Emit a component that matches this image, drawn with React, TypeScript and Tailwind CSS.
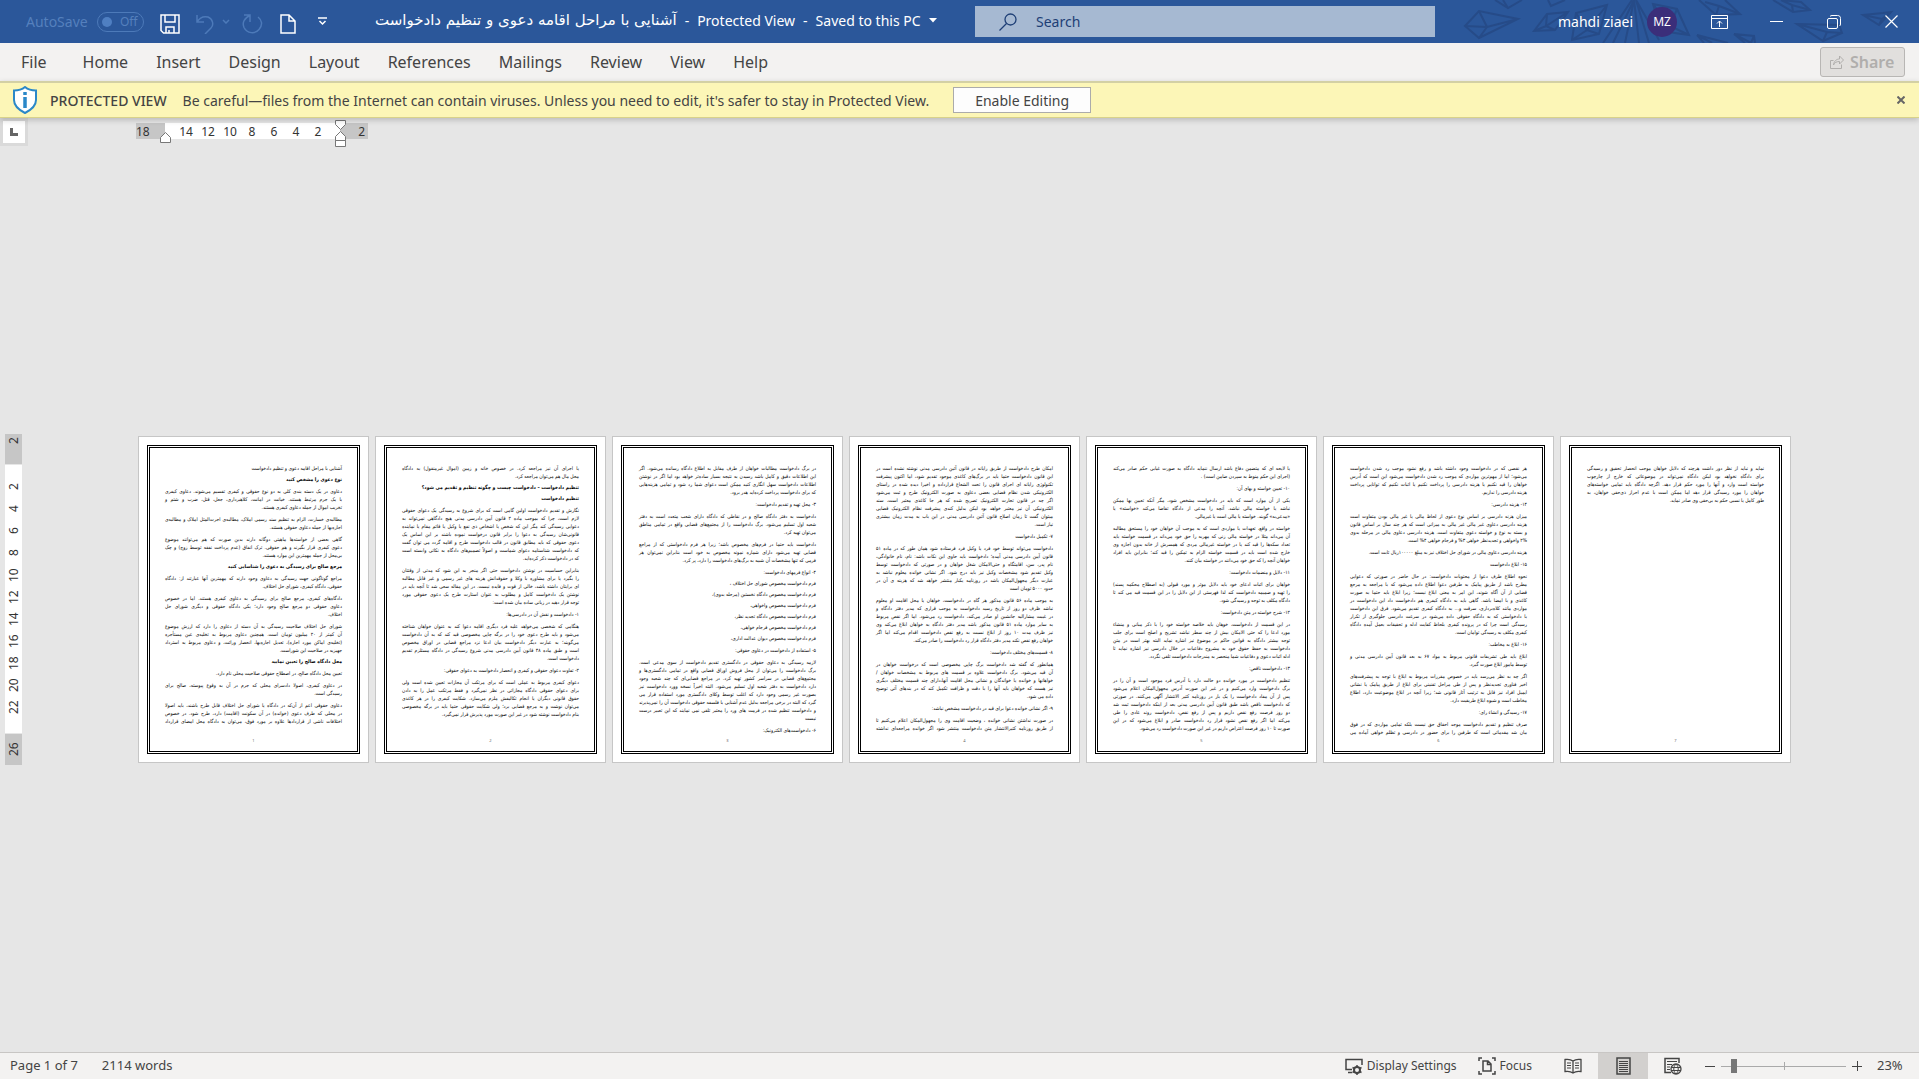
import type { ReactNode } from "react";
import clsx from "clsx";

type Block = { kind?: "heading" | "item"; lines: string[] };

const TABS = ["Home", "Insert", "Design", "Layout", "References", "Mailings", "Review", "View", "Help"];

// a trailing space marks a last line that runs on to the next page
const PAGES: Block[][] = [
  [
    { lines: ["آشنایی با مراحل اقامه دعوی و تنظیم دادخواست"] },
    { kind: "heading", lines: ["نوع دعوی را مشخص کنید"] },
    {
      lines: [
        "دعاوی در یک دسته بندی کلی به دو نوع حقوقی و کیفری تقسیم می‌شوند. دعاوی کیفری",
        "با یک جرم مرتبط هستند. خیانت در امانت، کلاهبرداری، جعل، قتل، ضرب و شتم و",
        "تخریب اموال از جمله دعاوی کیفری هستند.",
      ],
    },
    {
      lines: [
        "مطالبه‌ی خسارت، الزام به تنظیم سند رسمی املاک، مطالبه‌ی اجرت‌المثل املاک و مطالبه‌ی",
        "اجاره‌بها از جمله دعاوی حقوقی هستند.",
      ],
    },
    {
      lines: [
        "گاهی بعضی از خواسته‌ها ماهیتی دوگانه دارند بدین صورت که هم می‌توانند موضوع",
        "دعوی کیفری قرار بگیرند و هم حقوقی. ترک انفاق (عدم پرداخت نفقه توسط زوج) و چک",
        "بی‌محل از جمله مهمترین این موارد هستند.",
      ],
    },
    { kind: "heading", lines: ["مرجع صالح برای رسیدگی به دعوی را شناسایی کنید"] },
    {
      lines: [
        "مراجع گوناگونی جهت رسیدگی به دعاوی وجود دارند که مهمترین آنها عبارتند از: دادگاه",
        "حقوقی، دادگاه کیفری، شورای حل اختلاف.",
      ],
    },
    {
      lines: [
        "دادگاه‌های کیفری، مرجع صالح برای رسیدگی به دعاوی کیفری هستند. اما در خصوص",
        "دعاوی حقوقی دو مرجع صالح وجود دارد؛ یکی دادگاه حقوقی و دیگری شورای حل",
        "اختلاف.",
      ],
    },
    {
      lines: [
        "شورای حل اختلاف صلاحیت رسیدگی به آن دسته از دعاوی را دارد که ارزش موضوع",
        "آن کمتر از ۲۰ میلیون تومان است. همچنین دعاوی مربوط به تخلیه‌ی عین مستأجره",
        "(تخلیه‌ی اماکن مورد اجاره)، تعدیل اجاره‌بها، انحصار وراثت، و دعاوی مربوط به استرداد",
        "جهیزیه در صلاحیت این شوراست.",
      ],
    },
    { kind: "heading", lines: ["محل دادگاه صالح را تعیین نمایید"] },
    { lines: ["تعیین محل دادگاه صالح، در اصطلاح حقوقی صلاحیت محلی نام دارد."] },
    {
      lines: [
        "در دعاوی کیفری، اصولا دادسرای محلی که جرم در آن به وقوع پیوسته، صالح برای",
        "رسیدگی است.",
      ],
    },
    {
      lines: [
        "دعاوی حقوقی اعم از آن‌که در دادگاه یا شورای حل اختلاف قابل طرح باشند، باید اصولا",
        "در محلی که طرف دعوی (خوانده) در آن سکونت (اقامت) دارد، طرح شود. در خصوص",
        "اختلافات ناشی از قراردادها علاوه بر مورد فوق، می‌توان به دادگاه محل امضای قرارداد ",
      ],
    },
  ],
  [
    {
      lines: [
        "یا اجرای آن نیز مراجعه کرد. در خصوص خانه و زمین (اموال غیرمنقول) به دادگاه",
        "محل مال هم می‌توان مراجعه کرد.",
      ],
    },
    { kind: "heading", lines: ["تنظیم دادخواست – دادخواست چیست و چگونه تنظیم و تقدیم می شود؟"] },
    { kind: "heading", lines: ["تنظیم دادخواست"] },
    {
      lines: [
        "نگارش و تقدیم دادخواست اولین گامی است که برای شروع به رسیدگی یک دعوای حقوقی",
        "لازم است، چرا که بموجب ماده ۲ قانون آیین دادرسی مدنی هیچ دادگاهی نمی‌تواند به",
        "دعوایی رسیدگی کند مگر این که شخص یا اشخاص ذی نفع یا وکیل یا قائم مقام یا نماینده",
        "قانونی‌شان رسیدگی به دعوا را برابر قانون درخواست نموده باشند بر این اساس یک",
        "دعوی حقوقی که باید مطابق قانون در قالب دادخواست طرح و اقامه گردد می توان گفت",
        "که دادخواست شناسنامه دعوای شماست و اصولاً تصمیم‌های دادگاه به نکاتی وابسته است",
        "که در دادخواست ذکر کرده‌اید.",
      ],
    },
    {
      lines: [
        "بنابراین حساسیت در نوشتن دادخواست حتی اگر منجر به این شود که مدتی از وقتتان",
        "را بگیرد یا برای مشاوره با وکلا و حقوقدانش هزینه های غیر رسمی و غیر قابل مطالبه",
        "ای برایتان داشته باشد، خالی از قوت و فایده نیست. در این مقاله سعی شد تا آنچه باید در",
        "نوشتن یک دادخواست کامل و مطلوب به عنوان استارت طرح یک دعوی حقوقی مورد",
        "توجه قرار دهید در زبانی ساده بیان شده است:",
      ],
    },
    { lines: ["۱- دادخواست و نقش آن در دادرسی‌ها:"] },
    {
      lines: [
        "هنگامی که شخصی می‌خواهد علیه فرد دیگری اقامه دعوا کند به عنوان خواهان شناخته",
        "می‌شود و باید طرح دعوی خود را در برگه چاپی مخصوصی قید کند که به آن دادخواست",
        "می‌گویند؛ به عبارت دیگر دادخواست بیان ادعا نزد مراجع قضایی در اوراق مخصوص",
        "است و طبق ماده ۴۸ قانون آیین دادرسی مدنی شروع رسیدگی در دادگاه مستلزم تقدیم",
        "دادخواست است.",
      ],
    },
    { lines: ["۲- تفاوت دعوای حقوقی و کیفری و انحصار دادخواست به دعوای حقوقی:"] },
    {
      lines: [
        "دعوای کیفری مربوط به عملی است که برای مرتکب آن مجازات تعیین شده است ولی",
        "برای دعوای حقوقی دادگاه مجازاتی در نظر نمی‌گیرد و فقط مرتکب عمل را به دادن",
        "حقوق قانونی دیگران یا انجام تکالیفش ملزم می‌سازد. شکایت کیفری را در هر کاغذی",
        "می‌توان نوشت و به مرجع قضایی برد؛ ولی شکایت حقوقی حتما باید در برگه مخصوصی",
        "بنام دادخواست نوشته شود در غیر این صورت مورد پذیرش قرار نمی‌گیرد.",
      ],
    },
  ],
  [
    {
      lines: [
        "در برگ دادخواست مطالبات خواهان از طرف مقابل به اطلاع دادگاه رسانده می‌شود. اگر",
        "این اطلاعات دقیق و کامل باشد رسیدن به نتیجه بسیار ساده‌تر خواهد بود اما اگر در نوشتن",
        "اطلاعات دادخواست سهل انگاری کنید ممکن است دعوای شما رد شود و تمامی هزینه‌هایی",
        "که برای دادخواست پرداخت کرده‌اید هدر برود.",
      ],
    },
    { lines: ["۳- محل تهیه و تقدیم دادخواست:"] },
    {
      lines: [
        "دادخواست به دفتر دادگاه صالح و در نقاطی که دادگاه دارای شعب متعدد است به دفتر",
        "شعبه اول تسلیم می‌شود. برگ دادخواست را از مجتمع‌های قضایی واقع در تمامی مناطق",
        "می‌توان تهیه کرد.",
      ],
    },
    {
      lines: [
        "دادخواست باید حتما در فرم‌های مخصوص باشد؛ زیرا هر فرم دادخواستی که از مراجع",
        "قضایی تهیه می‌شود دارای شماره نمونه مخصوص به خود است بنابراین نمی‌توان هر",
        "فرمی که تنها مشخصات آن شبیه به برگ‌های دادخواست را دارد، پر کرد.",
      ],
    },
    { lines: ["۴- انواع فرمهای دادخواست:"] },
    { kind: "item", lines: ["فرم دادخواست مخصوص شورای حل اختلاف ،"] },
    { kind: "item", lines: ["فرم دادخواست مخصوص دادگاه نخستین (مرحله بدوی)،"] },
    { kind: "item", lines: ["فرم دادخواست مخصوص واخواهی،"] },
    { kind: "item", lines: ["فرم دادخواست مخصوص دادگاه تجدید نظر،"] },
    { kind: "item", lines: ["فرم دادخواست مخصوص فرجام خواهی،"] },
    { kind: "item", lines: ["فرم دادخواست مخصوص دیوان عدالت اداری،"] },
    { lines: ["۵- استفاده از دادخواست در دعاوی حقوقی:"] },
    {
      lines: [
        "لازمه رسیدگی به دعاوی حقوقی در دادگستری تقدیم دادخواست از سوی مدعی است.",
        "برگ دادخواست را می‌توان از محل فروش اوراق قضایی واقع در تمامی دادگستری‌ها و",
        "مجتمع‌های قضایی در سراسر کشور تهیه کرد. در مراجع قضایی‌ای که چند شعبه وجود",
        "دارد دادخواست به دفتر شعبه اول تسلیم می‌شود. البته اخیراً نسخه وورد دادخواست نیز",
        "بصورت غیر رسمی وجود دارد که اغلب توسط وکلای دادگستری مورد استفاده قرار می",
        "گیرد که البته در برخی مراجعه بدلیل عدم آشنایی با فلسفه حقوقی دادخواست آن را نمی‌پذیرند",
        "و دادخواست تنظیم شده در فرمت های ورد را معتبر تلقی نمی نمایند که این تعبیر درست",
        "نیست",
      ],
    },
    { lines: ["۶- دادخواست‌های الکترونیک:"] },
  ],
  [
    {
      lines: [
        "امکان طرح دادخواست از طریق رایانه در قانون آئین دادرسی مدنی نوشته نشده است در",
        "این قانون دادخواست حتما باید در برگ‌های کاغذی موجود تقدیم شود، اما اکنون پیشرفت",
        "تکنولوژی رایانه ای اجرای قانون را تحت الشعاع قرارداده و اخیرا دیده شده در راستای",
        "الکترونیکی شدن نظام قضایی بعضی دعاوی به صورت الکترونیک طرح و ثبت می‌شود",
        "اگر چه در قانون تجارت الکترونیک تصریح شده که هر جا کاغذی معتبر است، سند",
        "الکترونیکی آن نیز معتبر خواهد بود لیکن بدلیل کندی پیشرفت نظام الکترونیک قضایی",
        "میتوان گفت تا زمان اصلاح قانون آئین دادرسی مدنی در این باب به مدت زمان بیشتری",
        "نیاز است.",
      ],
    },
    { lines: ["۷- تکمیل دادخواست"] },
    {
      lines: [
        "دادخواست می‌تواند توسط خود فرد یا وکیل فرد فرستاده شود همان طور که در ماده ۵۱",
        "قانون آیین دادرسی مدنی آمده؛ دادخواست باید حاوی این نکات باشد: نام، نام خانوادگی،",
        "نام پدر، سن، اقامتگاه و حتی‌الامکان شغل خواهان و در صورتی که دادخواست توسط",
        "وکیل تقدیم شود مشخصات وکیل نیز باید درج شود. اگر نشانی خوانده معلوم نباشد به",
        "عبارت دیگر مجهول‌المکان باشد در روزنامه یکبار منتشر خواهد شد که هزینه ی آن در",
        "حدود ۵۰۰۰ تومان است",
      ],
    },
    {
      lines: [
        "به موجب ماده ۵۶ قانون مذکور هر گاه در دادخواست، خواهان یا محل اقامت او معلوم",
        "نباشد ظرف دو روز از تاریخ رسید دادخواست به موجب قراری که مدیر دفتر دادگاه و",
        "در غیبت مشارالیه جانشین او صادر می‌کند، دادخواست رد می‌شود. اما اگر نقص مربوط",
        "به سایر موارد ماده ۵۱ قانون مذکور باشد مدیر دفتر دادگاه به خواهان ابلاغ می‌کند وی",
        "نیز ظرف مدت ۱۰ روز از ابلاغ نسبت به رفع نقص دادخواست اقدام می‌کند اما اگر",
        "خواهان رفع نقص نکند مدیر دفتر دادگاه قرار رد دادخواست را صادر می‌کند.",
      ],
    },
    { lines: ["۸- قسمت‌های مختلف دادخواست:"] },
    {
      lines: [
        "همانطور که گفته شد دادخواست برگ چاپی مخصوصی است که درخواست خواهان در",
        "آن قید می‌شود. برگ دادخواست علاوه بر قسمت های مربوط به مشخصات خواهان /",
        "خواهانها و خوانده یا خواندگان و نشانی محل اقامت آنها،دارای چند قسمت مختلف دیگری",
        "نیز هست که خواهان باید آنها را با دقت و ظرافت تکمیل کند که در بندهای آتی توضیح",
        "داده می شود.",
      ],
    },
    { lines: ["۹- اگر نشانی خوانده دعوا برای قید در دادخواست مشخص نباشد:"] },
    {
      lines: [
        "در صورت نداشتن نشانی خوانده ، وضعیت اقامت وی را مجهول‌المکان اعلام می‌کنیم تا",
        "از طریق روزنامه کثیرالانتشار متن دادخواست منتشر شود اگر خوانده مراجعه‌ای نداشته ",
      ],
    },
  ],
  [
    {
      lines: [
        "یا لایحه ای که متضمن دفاع باشد ارسال ننماید دادگاه به صورت غیابی حکم صادر می‌کند",
        "(اجرای این حکم منوط به سپردن ضامن است) .",
      ],
    },
    { lines: ["۱۰- تعیین خواسته و بهای آن:"] },
    {
      lines: [
        "یکی از آن موارد است که باید در دادخواست مشخص شود، مگر آنکه تعیین بها ممکن",
        "نباشد یا خواسته مالی نباشد. آنچه را مدعی از دادگاه تقاضا می‌کند «خواسته» یا",
        "«مدعی‌به» گویند. خواسته یا مالی است یا غیرمالی.",
      ],
    },
    {
      lines: [
        "خواسته در واقع، تعهدات یا مواردی است که به موجب آن خواهان خود را مستحق مطالبه",
        "آن می‌داند مثلا در خواسته مالی زنی که مهریه را حق خود می‌داند در قسمت خواسته باید",
        "تعداد سکه‌ها را قید کند یا در خواسته غیرمالی مردی که همسرش از خانه بدون اجازه وی",
        "خارج شده است باید در قسمت خواسته الزام به تمکین را قید کند؛ بنابراین باید افراد",
        "خواهان آنچه را که حق خود می‌دانند در خواسته بیان کنند.",
      ],
    },
    { lines: ["۱۱- دلایل و منضمات دادخواست:"] },
    {
      lines: [
        "خواهان برای اثبات ادعای خود باید دلایل موثر و مورد قبولی (به اصطلاح محکمه پسند)",
        "را تهیه و ضمیمه دادخواست کند لذا فهرستی از این دلایل را در این قسمت قید می کند تا",
        "دادگاه مکلف به توجه و رسیدگی شود.",
      ],
    },
    { lines: ["۱۲- شرح خواسته در متن دادخواست:"] },
    {
      lines: [
        "در این قسمت از دادخواست، خوهان باید خلاصه خواسته خود را با ذکر مبانی و منشاء",
        "مورد ادعا را که حتی الامکان بیش از چند سطر نباشد تشریح و اصلح است برای جلب",
        "توجه بیشتر دادگاه به قوانین حاکم بر موضوع نیز اشاره نماید البته بهتر است در متن",
        "دادخواست به حفظ حقوق خود به مشروح دفاعیات در خلال دادرسی نیز اشاره نماید تا",
        "ادله اثبات دعوی و دفاعیات شما منحصر به مندرجات دادخواست تلقی نگردد.",
      ],
    },
    { lines: ["۱۳- دادخواست ناقص:"] },
    {
      lines: [
        "تنظیم دادخواست در مورد خوانده دو حالت دارد یا آدرس فرد موجود است و آن را در",
        "برگ دادخواست وارد می‌کنیم و در غیر این صورت آدرس مجهول‌المکان اعلام می‌شود",
        "پس از آن مفاد دادخواست را یک بار در روزنامه کثیر الانتشار آگهی می‌کنند. در صورتی",
        "که دادخواست ناقص باشد طبق قانون آیین دادرسی مدنی بعد از اینکه دادخواست ثبت شد",
        "دو روز فرصت رفع نقص داریم و پس از رفع نقص، دادخواست روند عادی را طی",
        "می‌کند اما اگر رفع نقص نشود قرار رد دادخواست صادر و ابلاغ می‌شود که در این",
        "صورت تا ۱۰ روز فرصت اعتراض داریم در غیر این صورت دادخواست رد می‌شود.",
      ],
    },
  ],
  [
    {
      lines: [
        "هر نقصی که در دادخواست وجود داشته باشد و رفع نشود موجب رد شدن دادخواست",
        "می‌شود؛ اما از مهم‌ترین مواردی که موجب رد شدن دادخواست می‌شود این است که آدرس",
        "خواهان را قید نکنیم یا هزینه دادرسی را پرداخت نکنیم یا اثبات نکنیم که توانایی پرداخت",
        "هزینه دادرسی را نداریم.",
      ],
    },
    { lines: ["۱۴- هزینه دادرسی:"] },
    {
      lines: [
        "میزان هزنه دادرسی بر اساس نوع دعوی از لحاظ مالی یا غیر مالی بودن متفاوت است",
        "هزینه دادرسی دعاوی غیر مالی غیر مالی به میزانی است که هر چند سال بر اساس قانون",
        "و بسته به نوع و خواسته دعوی متفاوت است. هزینه دادرسی دعاوی مالی در مرحله بدوی",
        "۲% واخواهی و تجدیدنظر خواهی ۳% و فرجام خواهی ۴% است.",
      ],
    },
    { lines: ["هزینه دادرسی دعاوی مالی در شورای حل اختلاف نیز به مبلغ ۱۰۰۰۰۰ریال ثابت است."] },
    { lines: ["۱۵- ابلاغ دادخواست"] },
    {
      lines: [
        "نحوه اطلاع طرف دعوا از محتویات دادخواست: در حال حاضر در صورتی که دعوایی",
        "مطرح باشد از طریق پیامک به طرفین دعوا اطلاع داده می‌شود که با مراجعه به مرجع",
        "قضایی از آن آگاه شوند، این امر به معنی ابلاغ نیست؛ زیرا ابلاغ باید حتما به صورت",
        "کاغذی و با امضا باشد. گاهی باید به دادگاه کیفری هم دادخواست داد این دادخواست در",
        "مواردی مانند کلاه‌برداری، سرقت و… به دادگاه کیفری تقدیم می‌شود. فرق این دادخواست",
        "با دادخواستی که به دادگاه حقوقی داده می‌شود در سرعت دادرسی جلوگیری از تکرار",
        "رسیدگی است چرا که در پرونده کیفری بلحاظ کفایت ادله و تحقیقات بعمل آمده دادگاه",
        "کیفری مکلف به رسیدگی توامان است.",
      ],
    },
    { lines: ["۱۶- ابلاغ به مخاطب:"] },
    {
      lines: [
        "ابلاغ باید طی تشریفات قانونی مربوط به مواد ۶۷ به بعد قانون آیین دادرسی مدنی و",
        "توسط مامور ابلاغ صورت گیرد.",
      ],
    },
    {
      lines: [
        "اگر چه به نظر می‌رسد باید در خصوص مقررات مربوط به ابلاغ با توجه به پیشرفت‌های",
        "اخیر فناوری تجدیدنظر و پس از طی مراحل تقنینی برای ابلاغ از طریق پیامک یا نشانی",
        "ایمیل افراد نیز قایل به ترتیب آثار قانونی شد؛ زیرا آنچه در ابلاغ موضوعیت دارد، اطلاع",
        "مخاطب است و شیوه ابلاغ طریقیت دارد.",
      ],
    },
    { lines: ["۱۷- رسیدگی و انشاء رای:"] },
    {
      lines: [
        "صرف تنظیم و تقدیم دادخواست موجد احقاق حق نیست بلکه تمامی مواردی که در فوق",
        "بیان شد مقدماتی است که طرفین را برای حضور در دادرسی و تظلم خواهی آماده می ",
      ],
    },
  ],
  [
    {
      lines: [
        "نماید و نباید از نظر دور داشت هرچند که دلایل خواهان موجب انحصار تحقیق و رسیدگی",
        "برای دادگاه نخواهد بود لیکن دادگاه نمی‌تواند در موضوعاتی که خارج از چارچوب",
        "خواسته است وارد و آنها را مورد حکم قرار دهد. اگرچه دادگاه باید تمامی خواسته‌های",
        "خواهان را مورد رسیدگی قرار دهد اما ممکن است با عدم احراز ذی‌حقی خواهان، به",
        "طور کامل یا نسبی حکم به بی‌حقی وی صادر نماید.",
      ],
    },
  ],
];

function Icon({ w, h, className, children }: { w: number; h: number; className?: string; children: ReactNode }) {
  return (
    <svg
      width={w}
      height={h}
      viewBox={`0 0 ${w} ${h}`}
      fill="none"
      stroke="currentColor"
      className={clsx("shrink-0", className)}
      aria-hidden="true"
    >
      {children}
    </svg>
  );
}

function TitleArt() {
  return (
    <svg
      className="pointer-events-none absolute right-0 top-0 text-[#264b88]"
      width="490"
      height="43"
      viewBox="0 0 490 43"
      fill="none"
      stroke="currentColor"
      strokeWidth="2"
      aria-hidden="true"
    >
      <path d="M36 26 50 11 89 19 50 38zM36 26 58 27 89 19M50 11 58 27 50 38" />
      <path d="M66 0 79 8 93 0M79 8 74 0" />
      <path d="M105 31 118 14 139 12 126 30zM118 14 117 26 139 12M105 31 117 26 126 30" />
      <path d="M119 0 122 6 136 0" />
      <path d="M143 40 147 13 178 5 170 34zM147 13 158 30 178 5M143 40 158 30 170 34" />
      <path d="M174 43 203 0M184 43 205 0M196 43 205 0 210 43M207 0 220 43M207 0 230 40" />
      <path d="M224 4 248 9 260 35 232 31zM248 9 241 26 260 35M224 4 241 26 232 31" />
      <path d="M270 0 287 15 311 14 296 0M287 15 290 6 276 2M290 6 311 14" />
      <path d="M268 35 283 43M268 35 275 43M268 35 299 43" />
      <path d="M305 34 325 36 326 43M305 34 316 43M305 34 322 43 325 36" />
      <path d="M344 0 364 12 381 10 372 2 352 0M364 12 363 5 381 10M363 5 352 0" />
      <path d="M368 24 410 25 413 33 394 41zM368 24 398 32 413 33M398 32 394 41" />
      <path d="M434 15 454 13 462 12 450 25zM434 15 453 19 462 12M453 19 450 25" />
    </svg>
  );
}

function TitleBar() {
  return (
    <header className="relative flex h-[43px] items-center overflow-hidden bg-[#2b579a] text-[14px] text-white">
      <TitleArt />
      <div className="flex w-[975px] shrink-0 items-center pl-[26px]">
        <label htmlFor="autosave" className="w-[71px] text-[#5580bd]">
          AutoSave
        </label>
        <button
          id="autosave"
          role="switch"
          aria-checked="false"
          className="flex h-5 w-[47px] items-center gap-2 rounded-full border border-[#4d7ab9] pl-1 text-[12px] text-[#5580bd]"
        >
          <span className="size-2.5 rounded-full bg-[#4f7fc2]" />
          Off
        </button>
        <button aria-label="Save" className="ml-4 mt-1">
          <Icon w={20} h={20}>
            <path d="M1 1h18v18H3.5L1 16.5zM5 1v7h10V1M6 19v-6h8v6M9 19v-3" strokeWidth="1.5" />
          </Icon>
        </button>
        <button aria-label="Undo" className="ml-4 mt-1 text-[#4d7ab9]">
          <Icon w={18} h={20}>
            <path d="M1 1v7h7M1 8C4 3 8 2 12 3c5 2 6 8 3 11l-6 6" strokeWidth="1.5" />
          </Icon>
        </button>
        <button aria-label="Undo options" className="ml-2 text-[#4d7ab9]">
          <Icon w={8} h={5}>
            <path d="m1 1 3 3 3-3" strokeWidth="1.5" />
          </Icon>
        </button>
        <button aria-label="Redo" className="ml-3 mt-1 text-[#4d7ab9]">
          <Icon w={21} h={20}>
            <path d="M2 1h6v7M8 1.500C2 4 0 9 2 13.500c3 6 11 7 15 2C21 11 20 6 16 3" strokeWidth="1.5" />
          </Icon>
        </button>
        <button aria-label="New document" className="ml-[17px] mt-1">
          <Icon w={16} h={20}>
            <path d="M1 1h8l6 6v12H1zM9 1v6h6" strokeWidth="1.5" />
          </Icon>
        </button>
        <button aria-label="Customize Quick Access Toolbar" className="ml-[22px]">
          <Icon w={9} h={9}>
            <path d="M0 1h9M1.500 4 4.500 7l3-3" strokeWidth="1.5" />
          </Icon>
        </button>
        <h1 className="ml-12 flex items-center gap-2 whitespace-nowrap pb-0.5">
          <span dir="rtl" lang="fa" className="font-['DejaVu_Sans',sans-serif] text-[15px]">
            آشنایی با مراحل اقامه دعوی و تنظیم دادخواست
          </span>
          <span>-</span>
          <span>Protected View</span>
          <span>-</span>
          <button className="flex items-center gap-2">
            Saved to this PC
            <Icon w={8} h={5}>
              <path d="M0 0h8L4 4.500z" fill="currentColor" stroke="none" />
            </Icon>
          </button>
        </h1>
      </div>
      <label className="relative flex h-[31px] w-[460px] shrink-0 items-center gap-[19px] bg-[#a6b9d2] pl-6 text-[#1e3f76]">
        <Icon w={18} h={18}>
          <circle cx="11.5" cy="6.5" r="5.5" strokeWidth="1.3" />
          <path d="m7.500 10.500-7 7" strokeWidth="1.3" />
        </Icon>
        <input
          aria-label="Search"
          placeholder="Search"
          className="w-full bg-transparent outline-none placeholder:text-[#1e3f76]"
        />
      </label>
      <div className="relative ml-auto flex items-center pr-[21px]">
        <span>mahdi ziaei</span>
        <span className="ml-[14px] flex size-[30px] items-center justify-center rounded-full bg-[#3b2e7a] text-[12px]">
          MZ
        </span>
        <button aria-label="Ribbon Display Options" className="ml-[34px]">
          <Icon w={17} h={14}>
            <path d="M.5.5h16v13H.5zM.5 3.500h16M8.500 12V6M6 8.500 8.500 6 11 8.500" />
          </Icon>
        </button>
        <button aria-label="Minimize" className="ml-[42px]">
          <Icon w={13} h={13}>
            <path d="M0 6.500h13" />
          </Icon>
        </button>
        <button aria-label="Restore" className="ml-11">
          <Icon w={14} h={14}>
            <rect x=".5" y="3.5" width="10" height="10" rx="1.5" />
            <path d="M3 1.500C3.500.8 4 .5 5 .5h5.500c2 0 3 1 3 3V9c0 1-.3 1.500-1 2" />
          </Icon>
        </button>
        <button aria-label="Close" className="ml-11">
          <Icon w={13} h={13}>
            <path d="m.5.5 12 12M12.500.5l-12 12" strokeWidth="1.2" />
          </Icon>
        </button>
      </div>
    </header>
  );
}

function RibbonTabs() {
  return (
    <nav className="flex h-[38px] items-center bg-[#f3f2f1] pl-[21px] pr-[14px] text-[16px] text-[#444]">
      <button className="mr-9">File</button>
      <div className="flex gap-7">
        {TABS.map((tab) => (
          <button key={tab}>{tab}</button>
        ))}
      </div>
      <button
        disabled
        className="ml-auto flex h-[30px] w-[85px] items-center gap-1.5 rounded-[3px] border border-[#b8b6b4] bg-[#e1dfdd] pl-[9px] font-semibold text-[#b0aeac]"
      >
        <Icon w={14} h={14}>
          <path d="M3.500 5.500h-3v8h11v-4M3.500 10c.5-4 3-6 6-6V1l4 4-4 4V6.500c-3 0-5 1-6 3.500z" />
        </Icon>
        Share
      </button>
    </nav>
  );
}

function ProtectedViewBar() {
  return (
    <div
      role="alert"
      className="relative z-10 flex h-[37px] items-center border-b border-t-2 border-b-[#d8d28a] border-t-[#d3d0a4] bg-[#fcf6b7] pl-[13px] pr-[14px] text-[14px] text-[#444] shadow-[0_2px_6px_rgba(0,0,0,0.2)]"
    >
      <Icon w={24} h={28}>
        <path
          d="M12 1c3 2.500 6.500 3.500 11 3.500V14c0 6-5 10-11 13C6 24 1 20 1 14V4.500C5.500 4.500 9 3.500 12 1z"
          fill="#fff"
          stroke="#2b88c8"
          strokeWidth="2"
        />
        <path d="M12 6v3M12 11v11" stroke="#2b88c8" strokeWidth="3.5" />
      </Icon>
      <strong className="ml-[13px] font-medium">PROTECTED VIEW</strong>
      <p className="ml-4">
        Be careful—files from the Internet can contain viruses. Unless you need to edit, it's safer to stay in
        Protected View.
      </p>
      <button className="ml-6 h-[26px] w-[138px] border border-[#ababab] bg-[#fdfdfd]">Enable Editing</button>
      <button aria-label="Close message" className="ml-auto text-[#666]">
        <Icon w={8} h={8}>
          <path d="m.5.5 7 7M7.500.5l-7 7" strokeWidth="2" />
        </Icon>
      </button>
    </div>
  );
}

function HorizontalRuler() {
  return (
    <div className="flex h-[28px] shrink-0 items-start">
      <button
        aria-label="Tab selector"
        className="flex h-[28px] w-[28px] items-center justify-center border-[3px] border-[#dadada] bg-white"
      >
        <Icon w={8} h={8} className="text-[#666]">
          <path d="M1.500 0v6.500H8" strokeWidth="3" />
        </Icon>
      </button>
      <div className="relative ml-[108px] mt-[5px] flex h-4 text-[12px] leading-[18px] text-[#333]">
        <span className="w-[29px] bg-[#c6c6c6]">18</span>
        <div className="flex w-[175px] bg-white pl-[10px]">
          {[14, 12, 10, 8, 6, 4, 2].map((n) => (
            <span key={n} className="w-[22px] text-center">
              {n}
            </span>
          ))}
        </div>
        <span className="w-7 bg-[#c6c6c6] pr-[3px] text-right">2</span>
        <Icon w={11} h={11} className="absolute left-[24px] top-[9px] text-[#777]">
          <path d="M.5 10.500V5.500l5-5 5 5v5z" fill="#fff" />
        </Icon>
        <Icon w={11} h={28} className="absolute -top-[3px] left-[199px] text-[#777]">
          <path d="M.5.500h10v4l-5 5-5-5zM.5 20.500v-4l5-5 5 5v4zM.5 20.500h10v6H.5z" fill="#fff" />
        </Icon>
      </div>
    </div>
  );
}

function VerticalRuler() {
  return (
    <div className="ml-[5px] flex w-[17px] shrink-0 flex-col gap-px text-[12px] leading-[17px] text-[#333]">
      <span className="h-[30px] rotate-180 bg-[#c6c6c6] pb-[3px] text-right [writing-mode:vertical-rl]">2</span>
      <div className="flex h-[268px] flex-col bg-white pt-[11px]">
        {[2, 4, 6, 8, 10, 12, 14, 16, 18, 20, 22].map((n) => (
          <span key={n} className="h-[22px] rotate-180 text-center [writing-mode:vertical-rl]">
            {n}
          </span>
        ))}
      </div>
      <span className="h-[31px] rotate-180 bg-[#c6c6c6] text-center [writing-mode:vertical-rl]">26</span>
    </div>
  );
}

function Page({ blocks, number }: { blocks: Block[]; number: number }) {
  return (
    <article className="h-[327px] w-[231px] shrink-0 border border-[#c6c6c6] bg-white p-2">
      <div className="flex h-full flex-col border-[3px] border-double border-black px-[15px] pb-1.5 pt-4">
        <div
          dir="rtl"
          lang="fa"
          className="font-['DejaVu_Sans_Condensed','DejaVu_Sans',sans-serif] text-[5px] leading-[8px] text-black"
        >
          {blocks.map((block, i) => (
            <div
              key={i}
              className={clsx(
                i > 0 && (block.kind ? "mt-[3px]" : "mt-1"),
                block.kind === "heading" && "font-bold",
              )}
            >
              {block.lines.map((line, j) => (
                <p
                  key={j}
                  className={clsx(
                    "whitespace-nowrap",
                    (j < block.lines.length - 1 || line.endsWith(" ")) && "[text-align-last:justify]",
                  )}
                >
                  {line}
                </p>
              ))}
            </div>
          ))}
        </div>
        <span className="mt-auto text-center text-[4px] leading-[8px] text-[#666]">{number}</span>
      </div>
    </article>
  );
}

function StatusBar() {
  return (
    <footer className="flex h-[27px] shrink-0 items-center border-t border-[#c8c6c4] bg-[#f3f2f1] pl-[10px] text-[13px] text-[#444]">
      <button>Page 1 of 7</button>
      <button className="ml-6">2114 words</button>
      <div className="ml-auto flex h-full items-center">
        <button className="flex items-center gap-1 text-[12px]">
          <Icon w={18} h={17}>
            <path d="M7 11.500H1V1.500h16V7M3 14.500h4" strokeWidth="1.5" />
            <circle cx="12" cy="12" r="3" strokeWidth="2" />
            <path d="M12 7v2M12 15v2M7.500 9.500l2 1M14.500 13.500l2 1M7.500 14.500l2-1M14.500 10.500l2-1" strokeWidth="1.5" />
          </Icon>
          Display Settings
        </button>
        <button className="ml-[21px] flex items-center gap-1 text-[12px]">
          <Icon w={18} h={18}>
            <path d="M4 1H1v3M14 1h3v3M4 17H1v-3M14 17h3v-3" strokeWidth="1.5" />
            <path d="M5 4h5l3 3v7H5zM9.500 4v3.500H13" strokeWidth="1.5" />
          </Icon>
          Focus
        </button>
        <button aria-label="Read Mode" className="ml-4 flex h-full w-[50px] items-center justify-center">
          <Icon w={18} h={16}>
            <path d="M9 3C7 1.500 4 1 1 1.500v12c3-.5 6 0 8 1.500 2-1.500 5-2 8-1.500v-12c-3-.5-6 0-8 1.500v12" strokeWidth="1.3" />
            <path d="M3 5h4M3 7.500h4M3 10h4M11 5h4M11 7.500h4M11 10h4" />
          </Icon>
        </button>
        <button
          aria-label="Print Layout"
          aria-pressed="true"
          className="flex h-full w-[50px] items-center justify-center bg-[#d2d0ce]"
        >
          <Icon w={15} h={18}>
            <path d="M1 1h13v16H1z" strokeWidth="1.5" />
            <path d="M3 4.500h9M3 6.500h9M3 8.500h9M3 10.500h9M3 12.500h9M3 14.500h9" />
          </Icon>
        </button>
        <button aria-label="Web Layout" className="flex h-full w-[50px] items-center justify-center">
          <Icon w={18} h={18}>
            <path d="M7 15.500H1v-14h14V6" strokeWidth="1.5" />
            <path d="M3 4.500h10M3 7.500h5M3 10h3M3 12.500h3" />
            <circle cx="12" cy="12" r="5" strokeWidth="1.3" />
            <path d="M7 10.500h10M7 13.500h10M12 7c-3 3-3 7 0 10M12 7c3 3 3 7 0 10" />
          </Icon>
        </button>
        <button aria-label="Zoom out" className="ml-[7px]">
          <Icon w={10} h={10}>
            <path d="M0 5.500h10" />
          </Icon>
        </button>
        <span className="relative ml-1.5 flex items-center">
          <span className="absolute left-1/2 h-2 w-px bg-[#aaa]" />
          <input
            type="range"
            aria-label="Zoom"
            defaultValue={8}
            className="relative h-[14px] w-[125px] appearance-none bg-[linear-gradient(#aaa,#aaa)] bg-[length:100%_1px] bg-center bg-no-repeat [&::-webkit-slider-thumb]:h-[14px] [&::-webkit-slider-thumb]:w-[6px] [&::-webkit-slider-thumb]:appearance-none [&::-webkit-slider-thumb]:bg-[#777]"
          />
        </span>
        <button aria-label="Zoom in" className="ml-1.5">
          <Icon w={10} h={10}>
            <path d="M0 5.500h10M5.500 0v10" />
          </Icon>
        </button>
        <button className="ml-[15px] w-[42px] text-left">23%</button>
      </div>
    </footer>
  );
}

export default function App() {
  return (
    <div className="flex h-screen flex-col overflow-hidden bg-[#e6e6e6] font-['Noto_Sans','Open_Sans',sans-serif]">
      <TitleBar />
      <RibbonTabs />
      <ProtectedViewBar />
      <main className="flex min-h-0 flex-1 flex-col">
        <HorizontalRuler />
        <div className="flex flex-1 items-center">
          <VerticalRuler />
          <div className="flex flex-1 justify-center gap-1.5 pr-3">
            {PAGES.map((blocks, i) => (
              <Page key={i} blocks={blocks} number={i + 1} />
            ))}
          </div>
        </div>
      </main>
      <StatusBar />
    </div>
  );
}
